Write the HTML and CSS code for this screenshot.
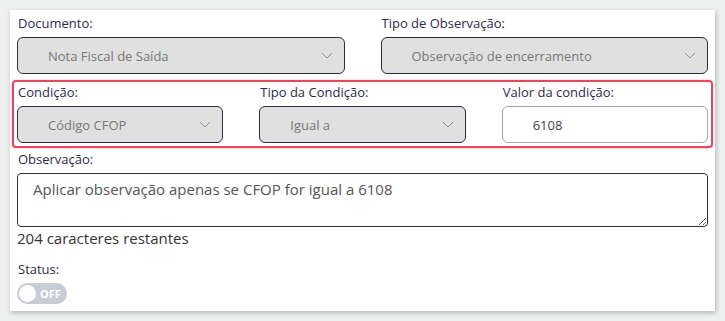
FILE: index.html
```html
<!DOCTYPE html>
<html lang="pt-BR">
<head>
    <meta charset="UTF-8">
    <meta name="viewport" content="width=device-width, initial-scale=1.0">
    <title>Observação</title>
    <link rel="stylesheet" href="styles.css">
</head>
<body>
    <div class="card">
        <div class="row two">
            <div class="field">
                <label>Documento:</label>
                <div class="select">
                    <span>Nota Fiscal de Saída</span>
                    <svg class="chevron" width="12" height="7" viewBox="0 0 12 7"><path d="M1 1l5 5 5-5" fill="none" stroke="#8a8f99" stroke-width="1"/></svg>
                </div>
            </div>
            <div class="field">
                <label>Tipo de Observação:</label>
                <div class="select">
                    <span>Observação de encerramento</span>
                    <svg class="chevron" width="12" height="7" viewBox="0 0 12 7"><path d="M1 1l5 5 5-5" fill="none" stroke="#8a8f99" stroke-width="1"/></svg>
                </div>
            </div>
        </div>

        <div class="row three highlight">
            <div class="field">
                <label>Condição:</label>
                <div class="select">
                    <span>Código CFOP</span>
                    <svg class="chevron" width="12" height="7" viewBox="0 0 12 7"><path d="M1 1l5 5 5-5" fill="none" stroke="#8a8f99" stroke-width="1"/></svg>
                </div>
            </div>
            <div class="field">
                <label>Tipo da Condição:</label>
                <div class="select">
                    <span>Igual a</span>
                    <svg class="chevron" width="12" height="7" viewBox="0 0 12 7"><path d="M1 1l5 5 5-5" fill="none" stroke="#8a8f99" stroke-width="1"/></svg>
                </div>
            </div>
            <div class="field">
                <label>Valor da condição:</label>
                <div class="input">6108</div>
            </div>
        </div>

        <div class="field">
            <label>Observação:</label>
            <textarea class="textarea">Aplicar observação apenas se CFOP for igual a 6108</textarea>
        </div>
        <p class="counter">204 caracteres restantes</p>

        <div class="field">
            <label>Status:</label>
            <div class="toggle">
                <span class="knob"></span>
                <span class="toggle-text">OFF</span>
            </div>
        </div>
    </div>
</body>
</html>
```

FILE: styles.css
```css
body {
    margin: 0;
    padding: 10px;
    background-color: #eff1f0;
    font-family: 'Open Sans', sans-serif;
    color: #2d2a48;
}

.card {
    background: white;
    width: 705px;
    height: 301px;
    box-sizing: border-box;
    padding: 2px 7px 0 7px;
    box-shadow: 1px 2px 5px rgba(0, 0, 0, 0.25);
}

.row {
    display: grid;
    column-gap: 36px;
}

.row.two {
    grid-template-columns: 1fr 1fr;
    margin-bottom: 6px;
}

.row.three {
    grid-template-columns: 1fr 1fr 1fr;
}

.highlight {
    margin: 0 -5px;
    padding: 0 3px 3px 3px;
    border: 2px solid #e3485f;
    border-radius: 4px;
    box-shadow: 0 0 3px rgba(227, 72, 95, 0.35);
}

.field label {
    display: block;
    font-size: 13px;
    line-height: 17px;
    padding: 3px 1px 5px 1px;
}

.highlight .field label {
    padding-top: 2px;
}

.select {
    display: flex;
    align-items: center;
    justify-content: space-between;
    height: 37px;
    box-sizing: border-box;
    padding: 0 11px 0 30px;
    background-color: #e0e0e0;
    border: 1px solid #2b2d42;
    border-radius: 6px;
    font-size: 13px;
    color: #777;
}

.input {
    display: flex;
    align-items: center;
    height: 37px;
    box-sizing: border-box;
    padding: 0 30px;
    border: 1px solid #a5a7ad;
    border-radius: 6px;
    font-size: 13px;
    color: #444;
}

.textarea {
    display: block;
    width: 100%;
    height: 54px;
    box-sizing: border-box;
    margin: 0;
    padding: 5px 15px;
    border: 1px solid #2b2d42;
    border-radius: 4px;
    font-family: 'Open Sans', sans-serif;
    font-size: 15px;
    color: #555;
    resize: vertical;
}

.counter {
    margin: 1px 0 10px 0;
    font-size: 15px;
    color: #333;
}

.toggle {
    display: flex;
    align-items: center;
    width: 50px;
    height: 21px;
    box-sizing: border-box;
    padding: 0 2px;
    background-color: #c7ccd8;
    border-radius: 11px;
}

.knob {
    width: 17px;
    height: 17px;
    border-radius: 50%;
    background: white;
}

.toggle-text {
    margin-left: 4px;
    font-size: 11px;
    font-weight: bold;
    color: white;
}
```
